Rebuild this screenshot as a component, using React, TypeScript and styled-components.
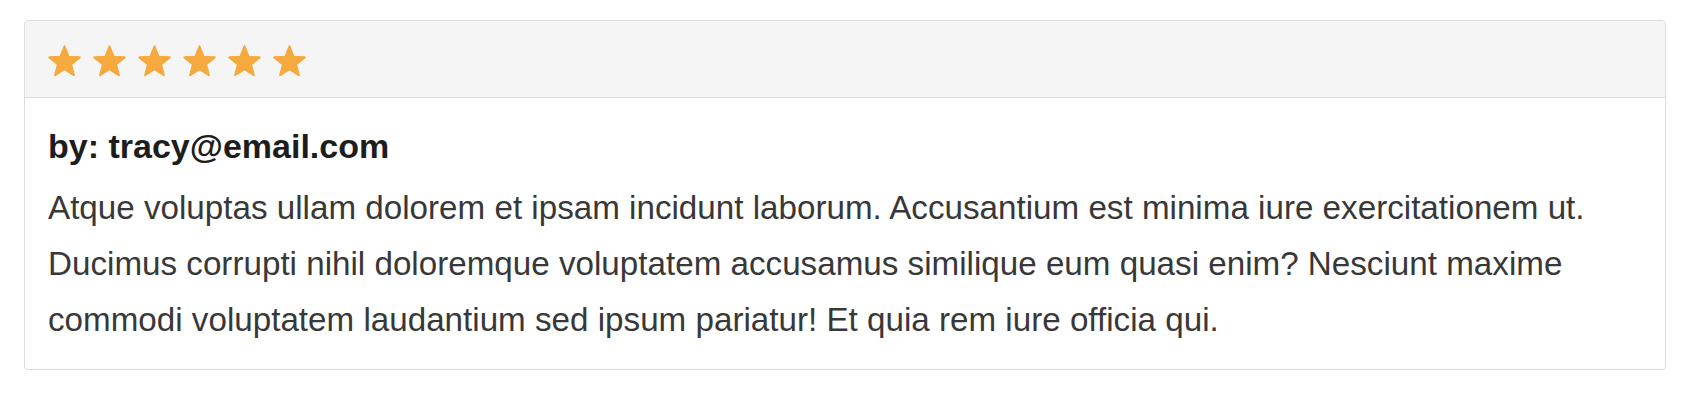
import React from "react";
import styled, { createGlobalStyle } from "styled-components";

const GlobalStyle = createGlobalStyle`
  body {
    margin: 0;
    background: #ffffff;
    font-family: "Liberation Sans", Arial, sans-serif;
  }
`;

const Page = styled.div`
  padding: 20px 34px 0 24px;
`;

const Panel = styled.div`
  border: 1px solid #dddddd;
  border-radius: 4px;
  background: #ffffff;
  box-shadow: 0 1px 1px rgba(0, 0, 0, 0.05);
  overflow: hidden;
`;

const PanelHeading = styled.div`
  display: flex;
  align-items: center;
  gap: 10px;
  height: 77px;
  padding: 3px 22px 0;
  box-sizing: border-box;
  background: #f5f5f5;
  border-bottom: 1px solid #dddddd;
`;

const PanelBody = styled.div`
  padding: 30px 22px 21px 23px;
`;

const Author = styled.h4`
  margin: 0 0 16px;
  font-size: 34px;
  line-height: 36px;
  font-weight: bold;
  color: #1d1d1d;
`;

const Comment = styled.p`
  margin: 0;
  font-size: 33.2px;
  line-height: 56px;
  color: #383838;
`;

const StarIcon = styled.svg`
  width: 35px;
  height: 32px;
  flex: none;
`;

const Star: React.FC = () => (
  <StarIcon viewBox="0 0 35 32">
    <path
      d="M17.5 1.3 L21.56 11.72 L32.72 12.36 L24.06 19.43 L26.9 30.24 L17.5 24.2 L8.1 30.24 L10.94 19.43 L2.28 12.36 L13.44 11.72 Z"
      fill="#f5a93f"
      stroke="#f5a93f"
      strokeWidth="2"
      strokeLinejoin="round"
    />
  </StarIcon>
);

const App: React.FC = () => {
  const rating = 6;

  return (
    <>
      <GlobalStyle />
      <Page>
        <Panel>
          <PanelHeading>
            {Array.from({ length: rating }).map((_, i) => (
              <Star key={i} />
            ))}
          </PanelHeading>
          <PanelBody>
            <Author>by: tracy@email.com</Author>
            <Comment>
              Atque voluptas ullam dolorem et ipsam incidunt laborum. Accusantium est minima iure
              exercitationem ut. Ducimus corrupti nihil doloremque voluptatem accusamus similique
              eum quasi enim? Nesciunt maxime commodi voluptatem laudantium sed ipsum pariatur! Et
              quia rem iure officia qui.
            </Comment>
          </PanelBody>
        </Panel>
      </Page>
    </>
  );
};

export default App;
